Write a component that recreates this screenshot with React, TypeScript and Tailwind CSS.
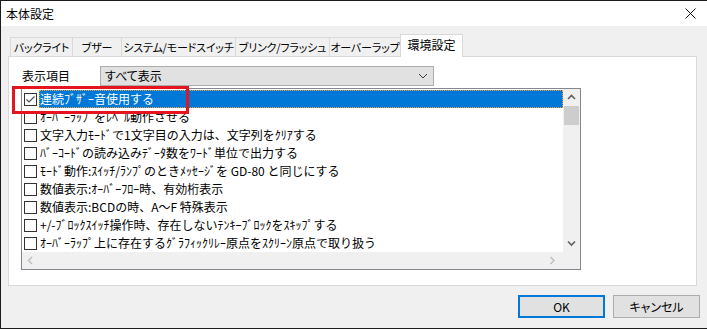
import React from "react";

const TABS = [
  { label: "バックライト", width: "w-[63px]", first: true },
  { label: "ブザー", width: "w-[49px]" },
  { label: "システム/モードスイッチ", width: "w-[114px]" },
  { label: "ブリンク/フラッシュ", width: "w-[94px]" },
  { label: "オーバーラップ", width: "w-[71px]" },
];

const ITEMS = [
  { label: "連続ﾌﾞｻﾞｰ音使用する", checked: true },
  { label: "ｵｰﾊﾞｰﾗｯﾌﾟをﾚﾍﾞﾙ動作させる" },
  { label: "文字入力ﾓｰﾄﾞで1文字目の入力は、文字列をｸﾘｱする" },
  { label: "ﾊﾞｰｺｰﾄﾞの読み込みﾃﾞｰﾀ数をﾜｰﾄﾞ単位で出力する" },
  { label: "ﾓｰﾄﾞ動作:ｽｲｯﾁ/ﾗﾝﾌﾟのときﾒｯｾｰｼﾞを GD-80 と同じにする" },
  { label: "数値表示:ｵｰﾊﾞｰﾌﾛｰ時、有効桁表示" },
  { label: "数値表示:BCDの時、A～F 特殊表示" },
  { label: "+/-ﾌﾞﾛｯｸｽｲｯﾁ操作時、存在しないﾃﾝｷｰﾌﾞﾛｯｸをｽｷｯﾌﾟする" },
  { label: "ｵｰﾊﾞｰﾗｯﾌﾟ上に存在するｸﾞﾗﾌｨｯｸﾘﾚｰ原点をｽｸﾘｰﾝ原点で取り扱う" },
];

function Chevron({ dir, color = "#606060" }: { dir: "up" | "down" | "left" | "right"; color?: string }) {
  const d = {
    up: "M1 5 L4.5 1.5 L8 5",
    down: "M1 1.5 L4.5 5 L8 1.5",
    left: "M5 1 L1.5 4.5 L5 8",
    right: "M1.5 1 L5 4.5 L1.5 8",
  }[dir];
  const horiz = dir === "up" || dir === "down";
  return (
    <svg width={horiz ? 9 : 7} height={horiz ? 7 : 9} viewBox={horiz ? "0 0 9 7" : "0 0 7 9"}>
      <path d={d} fill="none" stroke={color} strokeWidth="1.6" />
    </svg>
  );
}

function CheckBox({ checked }: { checked?: boolean }) {
  return (
    <div className="w-[13px] h-[13px] border border-[#333333] bg-white flex items-center justify-center shrink-0">
      {checked && (
        <svg width="11" height="11" viewBox="0 0 11 11">
          <path d="M1.5 5.5 L4 8 L9.5 2.5" fill="none" stroke="#555555" strokeWidth="1.2" />
        </svg>
      )}
    </div>
  );
}

export default function App() {
  return (
    <div className="relative w-[707px] h-[329px] bg-[#f0f0f0] border-l border-t border-b border-[#1c1c1c] font-['Noto_Sans_CJK_JP','Noto_Sans',sans-serif] text-[12px] text-black overflow-hidden">
      {/* Title bar */}
      <div className="h-[25px] bg-white flex items-center justify-between pl-[5px] pr-[11px] [font-feature-settings:'palt']">
        <span className="leading-none">本体設定</span>
        <svg width="11" height="11" viewBox="0 0 11 11">
          <path d="M0.5 0.5 L10.5 10.5 M10.5 0.5 L0.5 10.5" stroke="#111111" strokeWidth="1" />
        </svg>
      </div>

      <div className="pl-[7px] pt-[8px]">
        {/* Tabs */}
        <div className="h-[22px] flex items-end pl-[2px] [font-feature-settings:'palt'] text-[11px] tracking-[-0.2px] whitespace-nowrap relative z-10">
          {TABS.map((t) => (
            <div
              key={t.label}
              className={`${t.width} h-[19px] border-t border-r border-[#d9d9d9] bg-[#f0f0f0] flex items-center justify-center leading-none overflow-hidden ${
                t.first ? "border-l" : ""
              }`}
            >
              {t.label}
            </div>
          ))}
          <div className="w-[63px] h-[23px] -mb-px -ml-px border-t border-l border-r border-[#d9d9d9] bg-white flex justify-center pt-[4px] leading-none text-[12px] tracking-normal">
            環境設定
          </div>
        </div>

        {/* Panel */}
        <div className="w-[689px] h-[230px] bg-white border border-[#d9d9d9] pl-[12px] pt-[9px]">
          <div className="flex items-center h-[20px]">
            <span className="w-[79px] pl-px leading-none [font-feature-settings:'palt']">表示項目</span>
            <div className="w-[334px] h-[20px] bg-[#e1e1e1] border border-[#adadad] flex items-center pl-[4px] pr-[5px]">
              <span className="leading-none [font-feature-settings:'palt']">すべて表示</span>
              <div className="ml-auto">
                <svg width="10" height="6" viewBox="0 0 10 6">
                  <path d="M1 1 L5 5 L9 1" fill="none" stroke="#3c3c3c" strokeWidth="1" />
                </svg>
              </div>
            </div>
          </div>

          {/* List box */}
          <div className="mt-[2px] w-[560px] h-[182px] border border-[#828790] flex flex-col">
            <div className="flex h-[163px]">
              <div className="flex-1 pt-px">
                {ITEMS.map((item, i) => (
                  <div key={i} className="h-[18px] flex items-center pl-[2px]">
                    <CheckBox checked={item.checked} />
                    {i === 0 ? (
                      <div className="ml-[2px] flex-1 h-[18px] bg-[#0078d7] text-white flex items-center pl-px outline-1 outline-dotted outline-[#f5a23a] -outline-offset-1 whitespace-nowrap">
                        {item.label}
                      </div>
                    ) : (
                      <div className="ml-[2px] pl-px whitespace-nowrap leading-none">{item.label}</div>
                    )}
                  </div>
                ))}
              </div>
              <div className="w-[17px] bg-[#f0f0f0] flex flex-col">
                <div className="h-[17px] flex items-center justify-center">
                  <Chevron dir="up" />
                </div>
                <div className="h-[19px] mx-px bg-[#cdcdcd]" />
                <div className="flex-1" />
                <div className="h-[17px] flex items-center justify-center">
                  <Chevron dir="down" />
                </div>
              </div>
            </div>
            <div className="h-[17px] bg-[#f0f0f0] flex items-center pl-[5px] pr-[24px] justify-between">
              <Chevron dir="left" color="#c2c2c2" />
              <Chevron dir="right" color="#c2c2c2" />
            </div>
          </div>
        </div>

        {/* Buttons */}
        <div className="mt-[9px] flex justify-end gap-[8px] pr-[7px] [font-feature-settings:'palt']">
          <button className="w-[87px] h-[23px] bg-[#e1e1e1] border-2 border-[#0078d7] flex items-center justify-center leading-none">
            OK
          </button>
          <button className="w-[87px] h-[23px] bg-[#e1e1e1] border border-[#adadad] flex items-center justify-center leading-none">
            キャンセル
          </button>
        </div>
      </div>

      {/* Annotation highlight */}
      <div className="absolute left-[11px] top-[85px] w-[177px] h-[28px] border-[3px] border-[#e5141e] pointer-events-none" />
    </div>
  );
}
